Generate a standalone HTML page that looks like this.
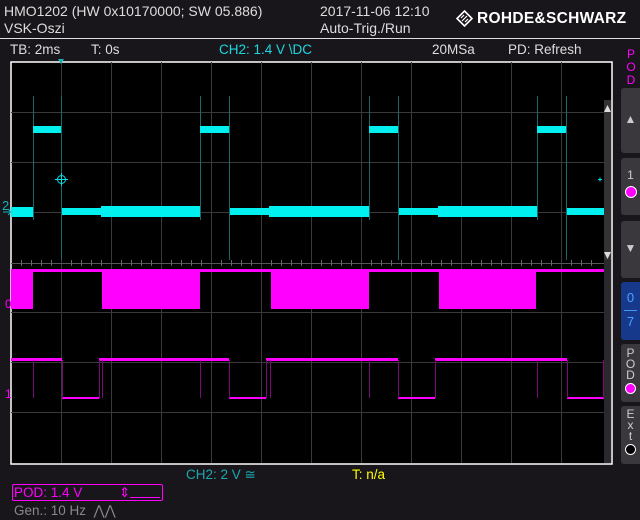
<!DOCTYPE html>
<html><head><style>
html,body{margin:0;padding:0;background:#18161a;}
body{width:640px;height:520px;overflow:hidden;position:relative;font-family:"Liberation Sans",sans-serif;}
.t{position:absolute;white-space:nowrap;font-size:13.5px;line-height:15px;}
.btn{position:absolute;left:621px;width:19px;background:#3a383c;border-radius:3px 0 0 3px;color:#ccc;text-align:center;font-size:12px;}
</style></head><body>
<div class="t" style="left:4px;top:4px;color:#ddd;font-size:14px">HMO1202 (HW 0x10170000; SW 05.886)</div>
<div class="t" style="left:4px;top:21px;color:#ddd;font-size:14px">VSK-Oszi</div>
<div class="t" style="left:320px;top:4px;color:#ddd;font-size:14px">2017-11-06 12:10</div>
<div class="t" style="left:320px;top:21px;color:#ddd;font-size:14px">Auto-Trig./Run</div>
<svg style="position:absolute;left:456px;top:10px" width="17" height="17" viewBox="0 0 17 17"><path d="M8.5 1 L16 8.5 L8.5 16 L1 8.5Z" fill="none" stroke="#fff" stroke-width="1.6"/><path d="M5 8 L8 5 M6 11 L11 6 M9 12 L12 9" stroke="#fff" stroke-width="1.2"/></svg>
<div class="t" style="left:477px;top:10px;color:#fff;font-weight:bold;font-size:15.5px;line-height:17px;letter-spacing:0.3px">ROHDE&amp;SCHWARZ</div>
<div style="position:absolute;left:0;top:38px;width:640px;height:1px;background:#ddd"></div>
<div class="t" style="left:10px;top:42px;color:#ddd">TB: 2ms</div>
<div class="t" style="left:91px;top:42px;color:#ddd">T: 0s</div>
<div class="t" style="left:219px;top:42px;color:#1ad8e0">CH2: 1.4 V \DC</div>
<div class="t" style="left:432px;top:42px;color:#ddd">20MSa</div>
<div class="t" style="left:508px;top:42px;color:#ddd">PD: Refresh</div>
<div class="t" style="left:626px;top:48px;color:#f0f;font-size:12px;line-height:13px;text-align:center;width:10px">P<br>O<br>D</div>

<svg style="position:absolute;left:0;top:0" width="640" height="520">
<rect x="11" y="62" width="601" height="402" fill="#000" stroke="#fff" stroke-width="1.5"/>
<rect x="604" y="100" width="7" height="363" fill="#2a282c"/>
<rect x="604" y="100" width="7" height="160" fill="#333"/>
<path d="M604 112 L607.5 105 L611 112Z M604 252 L607.5 259 L611 252Z" fill="#ddd"/>
<g stroke="#3a3a3a" stroke-width="1">
<path d="M61.5 62V463 M111.5 62V463 M161.5 62V463 M211.5 62V463 M261.5 62V463 M311.5 62V463 M361.5 62V463 M411.5 62V463 M461.5 62V463 M511.5 62V463 M561.5 62V463"/>
<path d="M11 112.5H604 M11 162.5H604 M11 212.5H604 M11 312.5H604 M11 362.5H604 M11 412.5H604"/>
<path d="M11 263.5H604" stroke="#555"/>
</g>
<g stroke="#666"><path d="M21.5 260v6 M31.5 260v6 M41.5 260v6 M51.5 260v6 M71.5 260v6 M81.5 260v6 M91.5 260v6 M101.5 260v6 M121.5 260v6 M131.5 260v6 M141.5 260v6 M151.5 260v6 M171.5 260v6 M181.5 260v6 M191.5 260v6 M201.5 260v6 M221.5 260v6 M231.5 260v6 M241.5 260v6 M251.5 260v6 M271.5 260v6 M281.5 260v6 M291.5 260v6 M301.5 260v6 M321.5 260v6 M331.5 260v6 M341.5 260v6 M351.5 260v6 M371.5 260v6 M381.5 260v6 M391.5 260v6 M401.5 260v6 M421.5 260v6 M431.5 260v6 M441.5 260v6 M451.5 260v6 M471.5 260v6 M481.5 260v6 M491.5 260v6 M501.5 260v6 M521.5 260v6 M531.5 260v6 M541.5 260v6 M551.5 260v6 M571.5 260v6 M581.5 260v6 M591.5 260v6"/></g>
<path d="M58 59 L64 59 L61 64Z" fill="#1ab0b8"/>
<g stroke="#1a6a6c" stroke-width="1">
<path d="M33.5 96V220 M61.5 96V260 M200.5 96V220 M229.5 96V260 M369.5 96V220 M398.5 96V260 M537.5 96V220 M566.5 96V260"/>
</g>
<g fill="#00f0f0">
<rect x="11" y="207" width="22" height="10"/>
<rect x="33" y="126" width="28" height="7"/>
<rect x="62" y="208" width="39" height="7"/>
<rect x="101" y="206" width="99" height="11"/>
<rect x="200" y="126" width="29" height="7"/>
<rect x="230" y="208" width="39" height="7"/>
<rect x="269" y="206" width="100" height="11"/>
<rect x="369" y="126" width="29" height="7"/>
<rect x="399" y="208" width="39" height="7"/>
<rect x="438" y="206" width="99" height="11"/>
<rect x="537" y="126" width="29" height="7"/>
<rect x="567" y="208" width="37" height="7"/>
</g>
<g stroke="#00e0e8" stroke-width="1" fill="none"><circle cx="61.5" cy="179.5" r="4"/><path d="M55 179.5H68 M61.5 173V186"/></g>
<path d="M598 179.5h4 M600 177.5v4" stroke="#00e0e8"/>
<g fill="#ff00ff">
<rect x="11" y="269" width="593" height="3"/>
<rect x="11" y="269" width="22" height="40"/>
<rect x="102" y="269" width="98" height="40"/>
<rect x="271" y="269" width="98" height="40"/>
<rect x="439" y="269" width="97" height="40"/>
<rect x="11" y="358" width="51" height="3"/>
<rect x="62" y="397" width="37" height="2"/>
<rect x="99" y="358" width="130" height="3"/>
<rect x="229" y="397" width="37" height="2"/>
<rect x="266" y="358" width="132" height="3"/>
<rect x="398" y="397" width="37" height="2"/>
<rect x="435" y="358" width="132" height="3"/>
<rect x="567" y="397" width="37" height="2"/>
</g>
<g stroke="#7a0a7a"><path d="M33.5 360V398 M62.5 360V398 M99.5 360V398 M102.5 360V398 M200.5 360V398 M229.5 360V398 M266.5 360V398 M270.5 360V398 M369.5 360V398 M398.5 360V398 M435.5 360V398 M537.5 360V398 M567.5 360V398 M603.5 360V398"/></g>
<path d="M3 212h8 M8 209l3 3l-3 3" stroke="#1ab0b8" fill="none"/>
</svg>
<div class="t" style="left:2px;top:198px;color:#1ab0b8;font-size:13px">2</div>
<div class="t" style="left:5px;top:297px;color:#f0f;font-size:12px">0</div>
<div class="t" style="left:5px;top:387px;color:#f0f;font-size:12px">1</div>

<div class="btn" style="top:88px;height:65px"><div style="margin-top:24px">▲</div></div>
<div class="btn" style="top:158px;height:57px"><div style="margin-top:10px">1</div><div style="width:10px;height:10px;border-radius:50%;background:#f0f;margin:4px auto 0;border:1px solid #fff"></div></div>
<div class="btn" style="top:221px;height:57px"><div style="margin-top:20px">▼</div></div>
<div class="btn" style="top:282px;height:58px;background:#17398c;color:#4aa0ff;font-size:13px;line-height:12px"><div style="margin-top:10px">0<br>—<br>7</div></div>
<div class="btn" style="top:344px;height:58px;line-height:11px"><div style="margin-top:4px">P<br>O<br>D</div><div style="width:9px;height:9px;border-radius:50%;background:#f0f;margin:2px auto 0;border:1px solid #fff"></div></div>
<div class="btn" style="top:406px;height:58px;line-height:11px"><div style="margin-top:3px">E<br>x<br>t</div><div style="width:9px;height:9px;border-radius:50%;background:#000;margin:2px auto 0;border:1px solid #fff"></div></div>

<div class="t" style="left:186px;top:467px;color:#1aa8b0">CH2: 2 V ≅</div>
<div class="t" style="left:352px;top:467px;color:#ff0">T: n/a</div>
<div style="position:absolute;left:12px;top:484px;width:149px;height:15px;border:1px solid #f0f;border-radius:2px"></div>
<div class="t" style="left:14px;top:485px;color:#f0f">POD: 1.4 V</div>
<div class="t" style="left:119px;top:485px;color:#f0f">⇕</div>
<div style="position:absolute;left:130px;top:497px;width:30px;height:1px;background:#f0f"></div>
<div class="t" style="left:14px;top:503px;color:#888">Gen.: 10 Hz &nbsp;⋀⋀</div>
</body></html>
